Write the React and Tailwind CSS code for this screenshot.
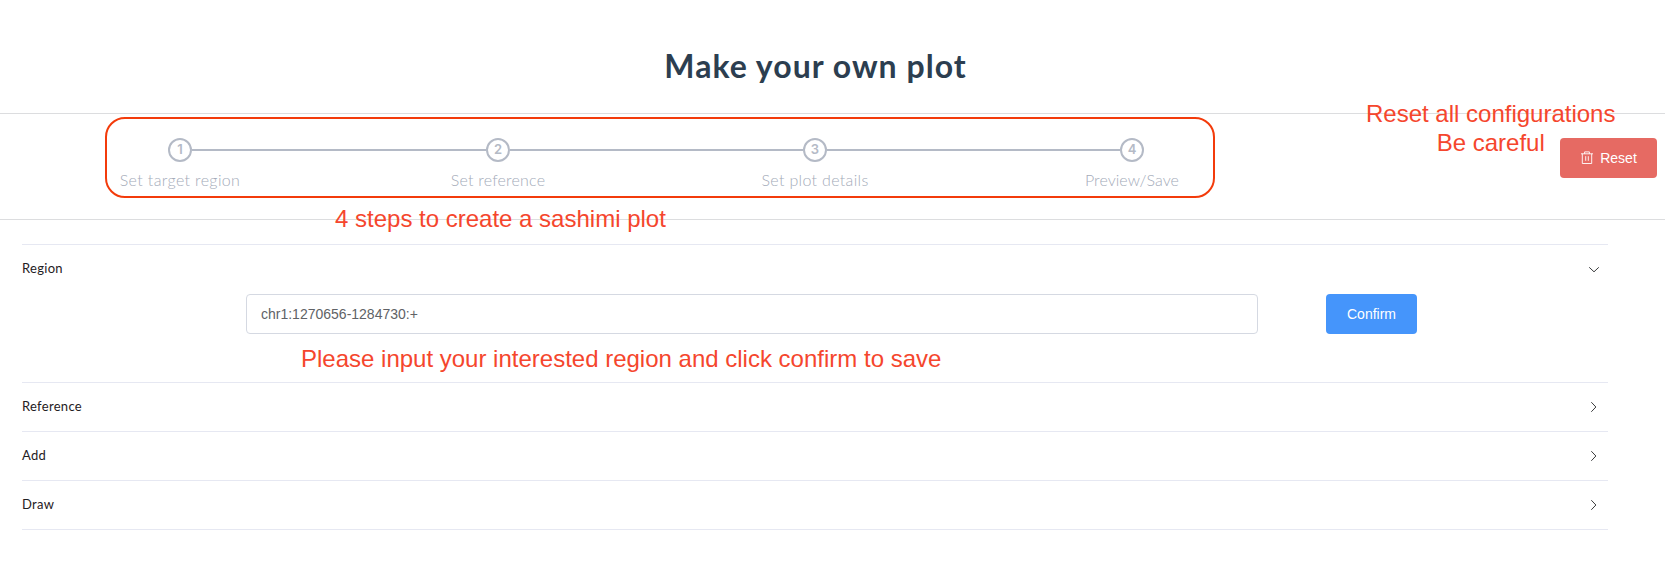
const steps = [
  { title: "Set target region", width: "w-[318px]", tracking: "tracking-[0.36px]" },
  { title: "Set reference", width: "w-[317px]", tracking: "tracking-[0.22px]" },
  { title: "Set plot details", width: "w-[317px]", tracking: "tracking-[0.33px]" },
  { title: "Preview/Save", width: "w-6", tracking: "tracking-[0.05px]" },
];

function TrashIcon() {
  return (
    <svg viewBox="0 0 14 14" className="h-3.5 w-3.5" fill="none" stroke="currentColor" strokeWidth="0.9">
      <path d="M1 2.8h12M4.6 2.8V.9h4.8v1.9M2.3 2.8v9.7h9.4V2.8M5.7 5.2v4.6M8.3 5.2v4.6" />
    </svg>
  );
}

function Chevron({ open }) {
  return (
    <svg viewBox="0 0 12 12" className="h-3 w-3" fill="none" stroke="#303133" strokeWidth="0.95">
      {open ? <path d="M1.2 4.3 6 8.8l4.8-4.5" /> : <path d="M3.3 1.2 7.9 6l-4.6 4.8" />}
    </svg>
  );
}

function PanelHeader({ title, open }) {
  return (
    <div className="flex h-12 items-center justify-between pr-2 text-[13px] font-normal text-[#1f2023]">
      <span className="tracking-[0.3px]">{title}</span>
      <Chevron open={open} />
    </div>
  );
}

function Note({ className, children }) {
  return (
    <div className={"absolute whitespace-nowrap font-['Liberation_Sans',sans-serif] text-2xl leading-[29px] text-[#f5462d] " + className}>
      {children}
    </div>
  );
}

export default function App() {
  return (
    <div className="relative h-[569px] w-[1665px] overflow-hidden bg-white font-['Lato',sans-serif]">
      <h1 className="flex h-[113px] items-center justify-center pr-[34px] pt-[18px] text-[32px] font-bold tracking-[1.02px] text-[#2c3e50]">
        Make your own plot
      </h1>

      <div className="flex h-[107px] items-start justify-between border-y border-[#dcdddf] pr-2 pt-6">
        <div className="flex pl-[168px]">
          {steps.map((step, i) => (
            <div key={step.title} className={"shrink-0 " + step.width}>
              <div className="flex items-center">
                <div className="flex h-6 w-6 shrink-0 items-center justify-center rounded-full border-2 border-[#b4bac6] pb-px font-['Inter',sans-serif] text-[13px] font-semibold leading-none text-[#b4bac6]">
                  {i + 1}
                </div>
                {i < steps.length - 1 && <div className="h-0.5 flex-1 bg-[#b4bac6]" />}
              </div>
              <div className="flex w-6 justify-center">
                <span className={"whitespace-nowrap text-base font-light leading-[36px] text-[#a4abb9] " + step.tracking}>
                  {step.title}
                </span>
              </div>
            </div>
          ))}
        </div>
        <button className="flex h-10 w-[97px] items-center justify-center gap-1.5 rounded bg-[#e66a63] font-['Liberation_Sans',sans-serif] text-sm text-white">
          <TrashIcon />
          Reset
        </button>
      </div>

      <div className="ml-[22px] mt-6 w-[1586px] border-t border-[#e6e8f2]">
        <section className="h-[138px] border-b border-[#e6e8f2]">
          <PanelHeader title="Region" open />
          <div className="flex pl-[224px] pt-px font-['Liberation_Sans',sans-serif] text-sm">
            <div className="flex h-10 w-[1012px] items-center rounded border border-[#d5d9e2] px-3.5 text-[#606266]">
              chr1:1270656-1284730:+
            </div>
            <button className="ml-[68px] h-10 w-[91px] rounded bg-[#4595fb] text-white">Confirm</button>
          </div>
        </section>
        {["Reference", "Add", "Draw"].map((title) => (
          <section key={title} className="border-b border-[#e6e8f2]">
            <PanelHeader title={title} />
          </section>
        ))}
      </div>

      <div className="absolute left-[105px] top-[117px] h-[81px] w-[1110px] rounded-[20px] border-2 border-[#f33b0b]" />
      <Note className="left-[335px] top-[204px]">4 steps to create a sashimi plot</Note>
      <Note className="left-[301px] top-[344px]">Please input your interested region and click confirm to save</Note>
      <Note className="left-[1366px] top-[99px] text-center">
        Reset all configurations
        <br />
        Be careful
      </Note>
    </div>
  );
}
